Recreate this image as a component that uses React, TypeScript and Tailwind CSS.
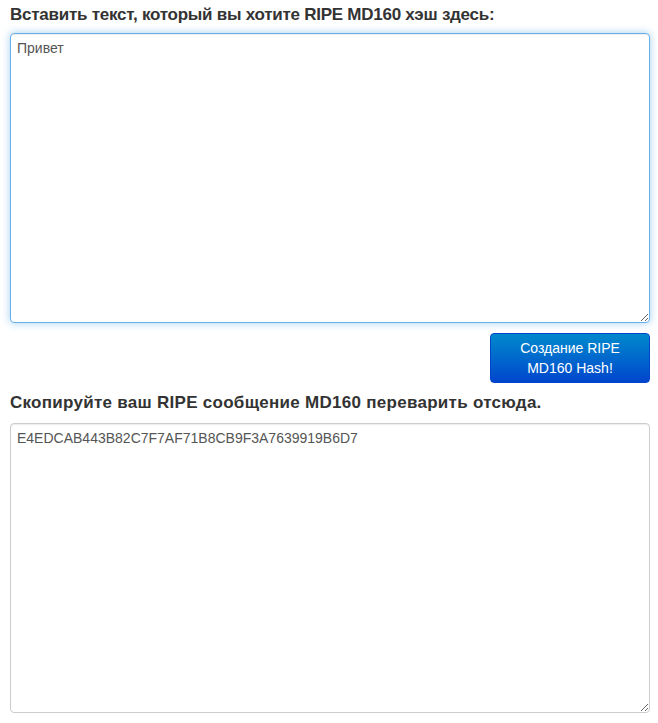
export default function App() {
  return (
    <div className="bg-white pl-[10px] pr-[8px] pt-[3px] text-[#333]" style={{ fontFamily: '"Liberation Sans", Arial, sans-serif' }}>
      <h4 className="text-[17px] font-bold leading-[24px] tracking-[-0.25px] mb-[6px]">
        Вставить текст, который вы хотите RIPE MD160 хэш здесь:
      </h4>
      <textarea
        defaultValue="Привет"
        className="block w-full h-[290px] rounded-[4px] border border-[#66afe9] px-[6px] py-[4px] text-[14px] leading-[20px] text-[#555] outline-none shadow-[inset_0_1px_1px_rgba(0,0,0,0.075),0_0_8px_rgba(102,175,233,0.6)]"
        style={{ fontFamily: '"Liberation Sans", Arial, sans-serif' }}
      />
      <div className="flex justify-end mt-[10px]">
        <button className="w-[160px] h-[50px] rounded-[4px] border border-[#0044cc] bg-gradient-to-b from-[#0088cc] to-[#0044cc] text-white text-[14px] leading-[20px] px-[12px]">
          Создание RIPE<br />MD160 Hash!
        </button>
      </div>
      <h4 className="text-[17px] font-bold leading-[24px] tracking-[0.28px] mt-[8px] mb-[8px]">
        Скопируйте ваш RIPE сообщение MD160 переварить отсюда.
      </h4>
      <textarea
        readOnly
        defaultValue="E4EDCAB443B82C7F7AF71B8CB9F3A7639919B6D7"
        className="block w-full h-[290px] rounded-[4px] border border-[#ccc] px-[6px] py-[4px] text-[14px] leading-[20px] text-[#555] outline-none shadow-[inset_0_1px_1px_rgba(0,0,0,0.075)]"
        style={{ fontFamily: '"Liberation Sans", Arial, sans-serif' }}
      />
    </div>
  );
}
